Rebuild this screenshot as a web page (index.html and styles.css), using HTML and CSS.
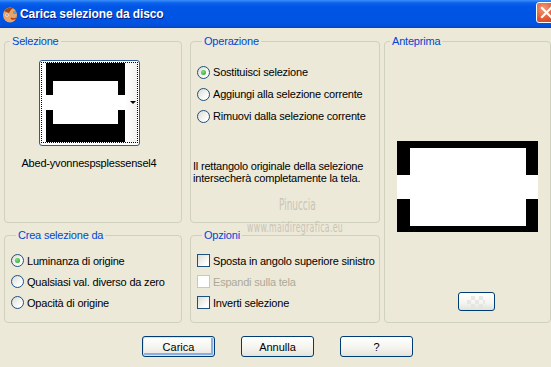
FILE: index.html
```html
<!DOCTYPE html>
<html lang="it">
<head>
  <meta charset="UTF-8">
  <meta name="viewport" content="width=device-width, initial-scale=1.0">
  <title>Carica selezione da disco</title>
  <link rel="stylesheet" href="styles.css">
</head>
<body>
  <div class="finestra">
    <div class="titolo">
      <svg class="icona" width="17" height="17" viewBox="0 0 17 17">
        <ellipse cx="9" cy="9" rx="7" ry="7.5" fill="#e9a467"/>
        <path d="M3 5 Q6 1 12 2 Q9 4 8 7 Q5 6 3 5Z" fill="#9c4a1c"/>
        <circle cx="6" cy="9" r="1.6" fill="#fff"/>
        <circle cx="6" cy="9" r="0.8" fill="#2a4fb0"/>
        <path d="M10 12 Q12 14 15 12" stroke="#b0301c" stroke-width="1.4" fill="none"/>
        <rect x="12" y="5" width="3" height="3" fill="#4fa3e8"/>
      </svg>
      <span class="titolo-testo">Carica selezione da disco</span>
      <span class="chiudi">
        <svg width="19" height="19" viewBox="0 0 19 19">
          <path d="M5 5 L14 14 M14 5 L5 14" stroke="#fff" stroke-width="2.2" stroke-linecap="square"/>
        </svg>
      </span>
    </div>

    <div class="griglia">
      <fieldset class="gruppo selezione">
        <legend>Selezione</legend>
        <div class="miniatura">
          <div class="focus">
            <svg width="79" height="79" viewBox="0 0 79 79">
              <rect width="79" height="79" fill="#000"/>
              <rect x="7" y="18" width="65" height="43" fill="#fff"/>
              <rect x="0" y="32" width="79" height="15" fill="#fff"/>
            </svg>
            <span class="tendina"><span class="freccia"></span></span>
          </div>
        </div>
        <div class="nome">Abed-yvonnespsplessensel4</div>
      </fieldset>

      <fieldset class="gruppo operazione">
        <legend>Operazione</legend>
        <div class="riga"><span class="radio on"></span>Sostituisci selezione</div>
        <div class="riga"><span class="radio"></span>Aggiungi alla selezione corrente</div>
        <div class="riga"><span class="radio"></span>Rimuovi dalla selezione corrente</div>
        <p class="nota">Il rettangolo originale della selezione<br>intersecherà completamente la tela.</p>
      </fieldset>

      <fieldset class="gruppo anteprima">
        <legend>Anteprima</legend>
        <svg class="preview" width="141" height="91" viewBox="0 0 141 91">
          <rect width="141" height="91" fill="#000"/>
          <rect x="13" y="7" width="116" height="78" fill="#fff"/>
          <rect x="0" y="34" width="141" height="24" fill="#fff"/>
        </svg>
        <button class="mini"><span class="scacchi"></span></button>
      </fieldset>

      <fieldset class="gruppo crea">
        <legend>Crea selezione da</legend>
        <div class="riga bassa"><span class="radio on"></span>Luminanza di origine</div>
        <div class="riga bassa"><span class="radio"></span>Qualsiasi val. diverso da zero</div>
        <div class="riga bassa"><span class="radio"></span>Opacità di origine</div>
      </fieldset>

      <fieldset class="gruppo opzioni">
        <legend>Opzioni</legend>
        <div class="riga bassa"><span class="check"></span>Sposta in angolo superiore sinistro</div>
        <div class="riga bassa spento"><span class="check"></span>Espandi sulla tela</div>
        <div class="riga bassa"><span class="check"></span>Inverti selezione</div>
      </fieldset>
    </div>

    <div class="pulsanti">
      <button class="pulsante predefinito">Carica</button>
      <button class="pulsante">Annulla</button>
      <button class="pulsante">?</button>
    </div>

    <span class="firma">Pinuccia</span>
    <span class="sito">www.maidiregrafica.eu</span>
  </div>
</body>
</html>
```

FILE: styles.css
```css
body {
  margin: 0;
  background-color: #ece9d8;
  font-family: "Liberation Sans", Arial, sans-serif;
  font-size: 11px;
  letter-spacing: -0.2px;
  color: #000;
  overflow: hidden;
}

.finestra {
  position: relative;
  width: 551px;
  height: 367px;
}

/* barra del titolo stile XP */
.titolo {
  height: 28px;
  display: flex;
  align-items: center;
  background: linear-gradient(to bottom, #3d8ff9 0px, #0b62ec 3px, #0055e5 7px, #0054e3 20px, #0250dc 26px, #0a3fbc 28px);
}

.icona {
  margin: 0 2px 0 1px;
  flex: none;
}

.titolo-testo {
  flex: 1;
  color: #fff;
  font-weight: bold;
  font-size: 12px;
  letter-spacing: -0.1px;
  text-shadow: 1px 1px 0 #0a1883;
}

.chiudi {
  width: 21px;
  height: 21px;
  margin-right: -6px;
  margin-top: -3px;
  box-sizing: border-box;
  border: 1px solid #fff;
  border-radius: 3px;
  background: radial-gradient(circle at 35% 30%, #f09a7c, #e35c34 55%, #c2391b);
  display: flex;
  align-items: center;
  justify-content: center;
}

/* griglia dei gruppi */
.griglia {
  display: grid;
  grid-template-columns: 178px 190px 163px;
  grid-template-rows: 188px 94px;
  column-gap: 8px;
  row-gap: 6px;
  padding: 7px 0 0 4px;
}

.griglia .anteprima {
  grid-column: 3;
  grid-row: 1 / span 2;
  margin-left: -4px;
}

.gruppo {
  margin: 0;
  padding: 0;
  min-width: 0;
  border: 1px solid #d0d0bf;
  border-radius: 4px;
  display: flex;
  flex-direction: column;
}

.gruppo legend {
  margin-left: 5px;
  padding: 0 2px;
  line-height: 13px;
  color: #0046d5;
}

.selezione {
  align-items: center;
  padding-right: 8px;
}

.miniatura {
  margin-top: 12px;
  width: 101px;
  height: 86px;
  box-sizing: border-box;
  border: 1px solid #2c5a94;
  border-radius: 3px;
  background-color: #fff;
  padding: 1px;
}

.focus {
  height: 81px;
  box-sizing: border-box;
  border: 1px dotted #000;
  padding-left: 4px;
  display: flex;
}

.tendina {
  flex: 1;
  display: flex;
  align-items: center;
  justify-content: flex-end;
  padding-right: 1px;
  background: linear-gradient(to right, #fff, #f1f1ee);
}

.freccia {
  width: 0;
  height: 0;
  border-left: 3px solid transparent;
  border-right: 3px solid transparent;
  border-top: 3px solid #000;
}

.nome {
  margin-top: 11px;
  line-height: 13px;
}

.operazione {
  padding: 13px 0 0 6px;
}

.riga {
  height: 22px;
  display: flex;
  align-items: center;
  white-space: nowrap;
}

.riga.bassa {
  height: 21px;
}

.radio, .check {
  width: 13px;
  height: 13px;
  box-sizing: border-box;
  border: 1px solid #1c5180;
  background: linear-gradient(135deg, #dcdcd5, #fff 80%);
  margin-right: 3px;
  flex: none;
  display: flex;
  align-items: center;
  justify-content: center;
}

.radio {
  border-radius: 50%;
}

.radio.on::after {
  content: "";
  width: 5px;
  height: 5px;
  border-radius: 50%;
  background: radial-gradient(circle at 40% 35%, #7fe27f, #21a121);
}

.spento {
  color: #aca899;
}

.spento .check {
  border-color: #cac8bb;
  background: #fff;
}

.nota {
  margin: 33px 0 0 -4px;
  line-height: 12px;
}

.crea {
  padding: 8px 0 0 6px;
}

.opzioni {
  padding: 8px 0 0 6px;
}

.anteprima {
  align-items: center;
}

.preview {
  margin-top: 93px;
}

.mini {
  margin: 60px 0 0 17px;
  width: 37px;
  height: 19px;
  padding: 0;
  border: 1px solid #003c74;
  border-radius: 3px;
  background: linear-gradient(to bottom, #fff, #f4f4f0 60%, #e3e2da);
  display: flex;
  align-items: center;
  justify-content: center;
}

.scacchi {
  width: 18px;
  height: 12px;
  background:
    linear-gradient(45deg, #e4e4e0 25%, transparent 25%, transparent 75%, #e4e4e0 75%),
    linear-gradient(45deg, #e4e4e0 25%, transparent 25%, transparent 75%, #e4e4e0 75%);
  background-size: 8px 8px;
  background-position: 0 0, 4px 4px;
  opacity: 0.8;
}

/* pulsanti in basso */
.pulsanti {
  display: flex;
  justify-content: center;
  gap: 26px;
  margin-top: 13px;
  padding-left: 4px;
}

.pulsante {
  width: 73px;
  height: 21px;
  padding: 0;
  font-family: "Liberation Sans", Arial, sans-serif;
  font-size: 11px;
  color: #000;
  border: 1px solid #003c74;
  border-radius: 3px;
  background: linear-gradient(to bottom, #fff, #f5f4ef 55%, #e4e3dc);
}

.pulsante.predefinito {
  box-shadow: inset 0 0 0 1px #cee7ff, inset -1px -1px 0 2px #89ade4;
}

/* filigrana sopra la finestra */
.firma, .sito {
  position: absolute;
  color: #c8c4b6;
  font-family: "DejaVu Sans Condensed", "Liberation Sans", sans-serif;
  letter-spacing: 0;
  transform-origin: left top;
}

.firma {
  left: 279px;
  top: 195px;
  font-size: 16px;
  transform: scaleX(0.62);
}

.sito {
  left: 247px;
  top: 219px;
  font-size: 14px;
  letter-spacing: 0.5px;
  transform: scaleX(0.62);
}
```
